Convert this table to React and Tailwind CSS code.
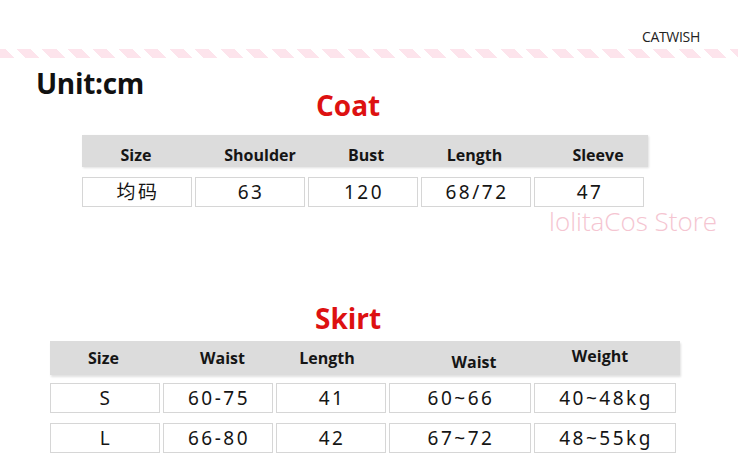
import React from 'react';

const coatHead = [
    { label: 'Size', cls: 'pr-[2px]' },
    { label: 'Shoulder', cls: 'pl-[20px]' },
    { label: 'Bust', cls: 'pl-[6px]' },
    { label: 'Length', cls: 'pr-[3px]' },
    { label: 'Sleeve', cls: 'pl-[18px]' },
];
const coatRows = [['均码', '63', '120', '68/72', '47']];

const skirtHead = [
    { label: 'Size', cls: 'pr-[3px]' },
    { label: 'Waist', cls: 'pl-[9px]' },
    { label: 'Length', cls: 'pr-[8px]' },
    { label: 'Waist', cls: 'pl-[28px] pt-[4px]' },
    { label: 'Weight', cls: 'pr-[10px] -mt-[2px]' },
];
const skirtRows = [
    ['S', '60-75', '41', '60~66', '40~48kg'],
    ['L', '66-80', '42', '67~72', '48~55kg'],
];

const sans = "font-['Open_Sans',sans-serif]";
const cellFont = "font-['Noto_Sans','Noto_Sans_CJK_SC',sans-serif]";

const Cell = ({ children }) => (
    <div className={`h-[30px] border border-[#d6d6d6] flex items-center justify-center text-[19px] leading-none tracking-[2.5px] pl-[2px] text-[#151515] ${cellFont}`}>
        {children}
    </div>
);

const App = () => {
    return (
        <div className="w-[738px] h-[463px] bg-white relative overflow-hidden flex flex-col">
            {/* brand */}
            <div className={`flex justify-end pr-[38px] pt-[28px] text-[14px] leading-[17px] tracking-[-0.3px] text-[#222] ${sans}`}>
                CATWISH
            </div>
            {/* pink stripe band */}
            <div className="mt-[4px] h-[9px] w-full bg-[repeating-linear-gradient(45deg,#fde4ec_0px,#fde4ec_10px,#ffffff_10px,#ffffff_18px)]" />

            <div className={`mt-[15px] pl-[36px] text-[28px] leading-[20px] font-bold text-[#111] tracking-[-0.3px] ${sans}`}>
                Unit:cm
            </div>
            <div className={`pl-[316px] text-[28px] leading-[24px] font-bold text-[#dd1111] ${sans}`}>
                Coat
            </div>

            {/* coat table */}
            <div className="mt-[18px] ml-[82px] w-[566px] h-[32px] bg-[#dcdcdc] shadow-[1px_1px_2px_rgba(0,0,0,0.12)]">
                <div className={`grid grid-cols-[110px_110px_110px_110px_110px] gap-x-[3px] pt-[10px] text-[16px] leading-[20px] font-bold text-[#151515] ${sans}`}>
                    {coatHead.map((h) => (
                        <div key={h.label} className={`text-center ${h.cls}`}>{h.label}</div>
                    ))}
                </div>
            </div>
            <div className="mt-[10px] ml-[82px] grid grid-cols-[110px_110px_110px_110px_110px] gap-x-[3px]">
                {coatRows[0].map((v, i) => <Cell key={i}>{v}</Cell>)}
            </div>

            <div className={`mt-[99px] pl-[315px] text-[28px] leading-[24px] font-bold text-[#dd1111] ${sans}`}>
                Skirt
            </div>

            {/* skirt table */}
            <div className="mt-[11px] ml-[50px] w-[630px] h-[34px] bg-[#dcdcdc] shadow-[1px_2px_2px_rgba(0,0,0,0.12)]">
                <div className={`grid grid-cols-[110px_110px_110px_142px_142px] gap-x-[3px] pt-[7px] text-[16px] leading-[20px] font-bold text-[#151515] ${sans}`}>
                    {skirtHead.map((h, i) => (
                        <div key={i} className={`text-center ${h.cls}`}>{h.label}</div>
                    ))}
                </div>
            </div>
            <div className="mt-[8px] ml-[50px] grid grid-cols-[110px_110px_110px_142px_142px] gap-x-[3px] gap-y-[10px]">
                {skirtRows.map((row, r) => row.map((v, i) => <Cell key={`${r}-${i}`}>{v}</Cell>))}
            </div>

            {/* watermark */}
            <div className={`absolute left-[549px] top-[208px] text-[26px] leading-[26px] font-light text-[#f5c5d1] ${sans}`}>
                lolitaCos Store
            </div>
        </div>
    );
};

export default App;
